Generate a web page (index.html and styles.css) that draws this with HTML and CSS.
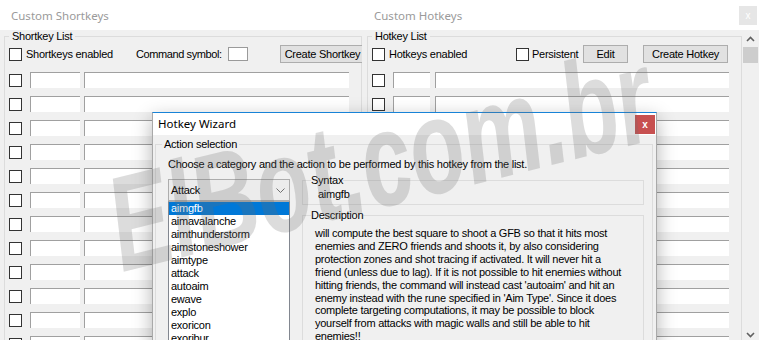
FILE: index.html
```html
<!DOCTYPE html>
<html>
<head>
<meta charset="utf-8">
<title>Custom Hotkeys</title>
<link rel="stylesheet" href="styles.css">
</head>
<body>
<div class="desk">
  <section class="win win-left">
    <div class="titlebar"><span class="title">Custom Shortkeys</span></div>
    <div class="winbody">
      <fieldset class="group list-group">
        <legend>Shortkey List</legend>
        <div class="toolbar">
          <label class="chk chk-short"><span class="box"></span>Shortkeys enabled</label>
          <span class="cmdlabel">Command symbol:</span>
          <span class="cmdinput"></span>
          <button class="btn btn-short">Create Shortkey</button>
        </div>
        <div class="rows">
          <div class="row"><span class="box"></span><span class="field f1"></span><span class="field f2"></span></div>
          <div class="row"><span class="box"></span><span class="field f1"></span><span class="field f2"></span></div>
          <div class="row"><span class="box"></span><span class="field f1"></span><span class="field f2"></span></div>
          <div class="row"><span class="box"></span><span class="field f1"></span><span class="field f2"></span></div>
          <div class="row"><span class="box"></span><span class="field f1"></span><span class="field f2"></span></div>
          <div class="row"><span class="box"></span><span class="field f1"></span><span class="field f2"></span></div>
          <div class="row"><span class="box"></span><span class="field f1"></span><span class="field f2"></span></div>
          <div class="row"><span class="box"></span><span class="field f1"></span><span class="field f2"></span></div>
          <div class="row"><span class="box"></span><span class="field f1"></span><span class="field f2"></span></div>
          <div class="row"><span class="box"></span><span class="field f1"></span><span class="field f2"></span></div>
          <div class="row"><span class="box"></span><span class="field f1"></span><span class="field f2"></span></div>
          <div class="row"><span class="box"></span><span class="field f1"></span><span class="field f2"></span></div>
        </div>
      </fieldset>
    </div>
  </section>

  <section class="win win-right">
    <div class="titlebar">
      <span class="title">Custom Hotkeys</span>
      <span class="close-dim">x</span>
    </div>
    <div class="winbody">
      <fieldset class="group list-group">
        <legend>Hotkey List</legend>
        <div class="toolbar">
          <label class="chk chk-hot"><span class="box"></span>Hotkeys enabled</label>
          <label class="chk chk-persist"><span class="box"></span>Persistent</label>
          <button class="btn btn-edit">Edit</button>
          <button class="btn btn-hot">Create Hotkey</button>
        </div>
        <div class="rows">
          <div class="row"><span class="box"></span><span class="field f1"></span><span class="field f2"></span></div>
          <div class="row"><span class="box"></span><span class="field f1"></span><span class="field f2"></span></div>
          <div class="row"><span class="box"></span><span class="field f1"></span><span class="field f2"></span></div>
          <div class="row"><span class="box"></span><span class="field f1"></span><span class="field f2"></span></div>
          <div class="row"><span class="box"></span><span class="field f1"></span><span class="field f2"></span></div>
          <div class="row"><span class="box"></span><span class="field f1"></span><span class="field f2"></span></div>
          <div class="row"><span class="box"></span><span class="field f1"></span><span class="field f2"></span></div>
          <div class="row"><span class="box"></span><span class="field f1"></span><span class="field f2"></span></div>
          <div class="row"><span class="box"></span><span class="field f1"></span><span class="field f2"></span></div>
          <div class="row"><span class="box"></span><span class="field f1"></span><span class="field f2"></span></div>
          <div class="row"><span class="box"></span><span class="field f1"></span><span class="field f2"></span></div>
          <div class="row"><span class="box"></span><span class="field f1"></span><span class="field f2"></span></div>
        </div>
      </fieldset>
      <div class="vscroll">
        <div class="sb-btn"><svg width="9" height="6" viewBox="0 0 9 6"><polyline points="1,5 4.5,1.5 8,5" fill="none" stroke="#606060" stroke-width="1.6"/></svg></div>
        <div class="sb-thumb"></div>
        <div class="sb-track"></div>
        <div class="sb-btn"><svg width="9" height="6" viewBox="0 0 9 6"><polyline points="1,1 4.5,4.5 8,1" fill="none" stroke="#606060" stroke-width="1.6"/></svg></div>
      </div>
    </div>
  </section>

  <div class="dialog">
    <div class="dlg-titlebar">
      <span class="dlg-title">Hotkey Wizard</span>
      <span class="close-red">x</span>
    </div>
    <div class="dlg-body">
      <fieldset class="group action-group">
        <legend>Action selection</legend>
        <div class="intro">Choose a category and the action to be performed by this hotkey from the list.</div>
        <div class="action-row">
          <div class="pick-col">
            <div class="combo"><span>Attack</span><svg width="9" height="5" viewBox="0 0 9 5"><polyline points="0.5,0.5 4.5,4.5 8.5,0.5" fill="none" stroke="#707070" stroke-width="1"/></svg></div>
            <ul class="actions">
              <li class="sel">aimgfb</li>
              <li>aimavalanche</li>
              <li>aimthunderstorm</li>
              <li>aimstoneshower</li>
              <li>aimtype</li>
              <li>attack</li>
              <li>autoaim</li>
              <li>ewave</li>
              <li>explo</li>
              <li>exoricon</li>
              <li>exoribur</li>
            </ul>
          </div>
          <div class="info-col">
            <fieldset class="group syntax-group">
              <legend>Syntax</legend>
              <div class="syntax">aimgfb</div>
            </fieldset>
            <fieldset class="group desc-group">
              <legend>Description</legend>
              <p class="desc">will compute the best square to shoot a GFB so that it hits most<br>enemies and ZERO friends and shoots it, by also considering<br>protection zones and shot tracing if activated. It will never hit a<br>friend (unless due to lag). If it is not possible to hit enemies without<br>hitting friends, the command will instead cast 'autoaim' and hit an<br>enemy instead with the rune specified in 'Aim Type'. Since it does<br>complete targeting computations, it may be possible to block<br>yourself from attacks with magic walls and still be able to hit<br>enemies!!</p>
            </fieldset>
          </div>
        </div>
      </fieldset>
    </div>
  </div>

  <div class="watermark">ElBot.com.br</div>
</div>
</body>
</html>
```

FILE: styles.css
```css
* { box-sizing: border-box; }

body {
  margin: 0;
  background: #f0f0f0;
  font-family: "Liberation Sans", Arial, sans-serif;
  font-size: 11px;
  letter-spacing: -0.25px;
  color: #000;
}

.desk {
  position: relative;
  width: 759px;
  height: 340px;
  overflow: hidden;
  display: flex;
}

/* windows */
.win {
  flex: none;
  height: 343px;
  display: flex;
  flex-direction: column;
  background: #f0f0f0;
}
.win-left { width: 362px; }
.win-right { width: 397px; }

.titlebar {
  flex: none;
  height: 30px;
  background: #fff;
  display: flex;
  align-items: center;
  justify-content: space-between;
}
.title {
  font-family: "Noto Sans", "Open Sans", sans-serif;
  font-size: 11.5px;
  letter-spacing: 0;
  color: #9a9a9a;
}
.win-left .title { padding-left: 11px; }
.win-right .title { padding-left: 12px; }

.close-dim {
  width: 18px;
  height: 19px;
  margin-right: 2px;
  background: #e6e6e6;
  color: #fff;
  font-size: 10px;
  letter-spacing: 0;
  display: flex;
  align-items: center;
  justify-content: center;
}

.winbody {
  flex: 1;
  min-height: 0;
  display: flex;
}

/* group boxes */
.group {
  margin: 0;
  min-width: 0;
  border: 1px solid #dcdcdc;
}
.group legend {
  padding: 0 3px;
  line-height: 13px;
}

.list-group {
  flex: 1;
  padding: 2px 12px 0 4px;
}
.win-left .list-group { margin-left: 4px; }
.win-right .list-group { margin-left: 5px; }

.toolbar {
  height: 18px;
  display: flex;
  align-items: center;
  white-space: nowrap;
}

.box {
  flex: none;
  width: 13px;
  height: 13px;
  border: 1px solid #333;
  background: #fff;
}

.chk {
  flex: none;
  display: flex;
  align-items: center;
  gap: 4px;
}
.chk-short { width: 127px; }
.chk-hot { width: 144px; }
.chk-persist { width: 67px; gap: 3px; }

.cmdlabel { flex: none; width: 92px; letter-spacing: -0.4px; }
.cmdinput {
  flex: none;
  width: 20px;
  height: 14px;
  border: 1px solid #9a9a9a;
  background: #fff;
}

.btn {
  flex: none;
  height: 18px;
  padding: 0;
  border: 1px solid #adadad;
  background: #e1e1e1;
  font: inherit;
  letter-spacing: inherit;
  color: #000;
}
.btn-short { width: 85px; margin-left: 32px; }
.btn-edit { width: 45px; }
.btn-hot { width: 85px; margin-left: 15px; }

.rows {
  margin-top: 9px;
  display: flex;
  flex-direction: column;
  gap: 8px;
}
.row {
  height: 16px;
  display: flex;
  align-items: center;
}
.field {
  height: 16px;
  background: #fff;
  border-top: 1px solid #a0a0a0;
  border-left: 1px solid #a0a0a0;
}
.win-left .f1 { width: 50px; margin-left: 8px; }
.win-left .f2 { flex: 1; margin-left: 4px; }
.win-right .f1 { width: 37px; margin-left: 8px; }
.win-right .f2 { flex: 1; margin-left: 5px; }

/* scrollbar */
.vscroll {
  flex: none;
  width: 17px;
  display: flex;
  flex-direction: column;
  background: #f0f0f0;
}
.sb-btn {
  height: 17px;
  display: flex;
  align-items: center;
  justify-content: center;
}
.sb-thumb {
  height: 16px;
  margin: 0 1px;
  background: #cdcdcd;
}
.sb-track { flex: 1; }

/* dialog window */
.dialog {
  position: absolute;
  left: 152px;
  top: 112px;
  width: 505px;
  height: 240px;
  border: 1px solid #a9a9a9;
  border-top-color: #1883d7;
  background: #f0f0f0;
  box-shadow: 0 6px 18px rgba(0, 0, 0, 0.3);
  display: flex;
  flex-direction: column;
}
.dlg-titlebar {
  flex: none;
  height: 22px;
  background: #fff;
  display: flex;
  justify-content: space-between;
}
.dlg-title {
  padding-left: 5px;
  font-family: "Noto Sans", "Open Sans", sans-serif;
  font-size: 11.5px;
  letter-spacing: 0;
  line-height: 22px;
  color: #000;
}
.close-red {
  width: 20px;
  height: 19px;
  margin: 2px 1px 0 0;
  background: #c75050;
  color: #fff;
  font-weight: bold;
  font-size: 10px;
  letter-spacing: 0;
  display: flex;
  align-items: center;
  justify-content: center;
}
.dlg-body {
  flex: 1;
  padding: 3px 3px 0 2px;
  display: flex;
}
.action-group {
  flex: 1;
  padding: 7px 8px 0 12px;
}
.action-group > legend { margin-left: -6px; padding: 0 2px; }

.intro { line-height: 13px; }

.action-row {
  margin-top: 3px;
  display: flex;
  gap: 12px;
  align-items: flex-start;
}
.pick-col {
  flex: none;
  width: 122px;
  margin-top: 5px;
}
.combo {
  height: 22px;
  border: 1px solid #adadad;
  background: #ececec;
  padding: 0 4px 0 2px;
  display: flex;
  align-items: center;
  justify-content: space-between;
}
.actions {
  list-style: none;
  margin: 0;
  padding: 0;
  height: 150px;
  background: #fff;
  border: 1px solid #828790;
  border-top-color: #adadad;
}
.actions li {
  height: 13px;
  line-height: 13px;
  padding-left: 2px;
}
.actions li.sel {
  background: #0078d7;
  color: #fff;
}

.info-col {
  flex: none;
  width: 342px;
}
.syntax-group { padding: 1px 8px 3px 8px; }
.syntax-group > legend { padding: 0; }
.syntax { line-height: 13px; margin-left: 7px; }

.desc-group {
  margin-top: 4px;
  padding: 5px 8px 0 12px;
}
.desc-group > legend { padding: 0; margin-left: -4px; }
.desc {
  margin: 0;
  line-height: 12.9px;
  white-space: nowrap;
}

/* watermark */
.watermark {
  position: absolute;
  left: 380px;
  top: 160px;
  transform: translate(-50%, -50%) rotate(-14deg) scaleX(0.66);
  font-family: "Liberation Sans", Arial, sans-serif;
  font-weight: bold;
  font-style: italic;
  font-size: 135px;
  letter-spacing: 0;
  line-height: 1;
  white-space: nowrap;
  color: rgba(110, 110, 110, 0.24);
  pointer-events: none;
}
```
